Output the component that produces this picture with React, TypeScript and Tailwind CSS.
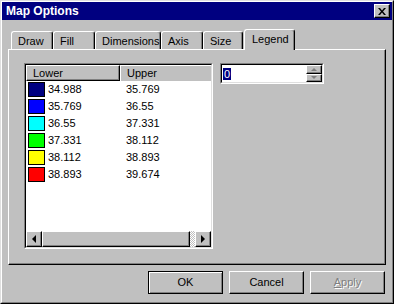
import React from 'react';

const rows = [
  { color: 'bg-[#000080]', lower: '34.988', upper: '35.769' },
  { color: 'bg-[#0000ff]', lower: '35.769', upper: '36.55' },
  { color: 'bg-[#00ffff]', lower: '36.55', upper: '37.331' },
  { color: 'bg-[#00ff00]', lower: '37.331', upper: '38.112' },
  { color: 'bg-[#ffff00]', lower: '38.112', upper: '38.893' },
  { color: 'bg-[#ff0000]', lower: '38.893', upper: '39.674' },
];

const tabs = [
  { label: 'Draw', w: 'w-[42px] ml-[3px]' },
  { label: 'Fill', w: 'w-[42px]' },
  { label: 'Dimensions', w: 'w-[66px]' },
  { label: 'Axis', w: 'w-[42px]' },
  { label: 'Size', w: 'w-[40px]' },
];

const raised =
  'border-t border-l border-t-white border-l-white border-r border-b border-r-black border-b-black shadow-[inset_-1px_-1px_#808080]';

function Arrow({ dir }: { dir: 'left' | 'right' | 'up' | 'down' }) {
  const points = {
    left: '4,0 4,8 0,4',
    right: '0,0 0,8 4,4',
    up: '0,4 6,4 3,1',
    down: '0,0 6,0 3,3',
  }[dir];
  const horiz = dir === 'left' || dir === 'right';
  return (
    <svg width={horiz ? 4 : 6} height={horiz ? 8 : 4} viewBox={horiz ? '0 0 4 8' : '0 0 6 4'}>
      <polygon points={points} fill={horiz ? '#000' : '#808080'} />
    </svg>
  );
}

export default function App() {
  return (
    <div className="w-[394px] h-[304px] bg-[#c0c0c0] border border-t-[#dfdfdf] border-l-[#dfdfdf] border-r-black border-b-black font-['Liberation_Sans',Arial,sans-serif] text-[11px] text-black select-none">
      <div className="h-full flex flex-col border border-t-white border-l-white border-r-[#808080] border-b-[#808080]">
        {/* title bar */}
        <div className="h-[18px] bg-[#000080] flex items-center justify-between pl-[4px] pr-[2px]">
          <span className="text-white font-bold text-[12px] leading-none">Map Options</span>
          <button className={`w-[16px] h-[14px] bg-[#c0c0c0] flex items-center justify-center ${raised}`}>
            <svg width="8" height="7" viewBox="0 0 8 7">
              <path d="M0 0h2l2 2.5L6 0h2L5 3.5 8 7H6L4 4.5 2 7H0l3-3.5z" fill="#000" />
            </svg>
          </button>
        </div>

        <div className="pl-[6px] pt-[9px]">
          {/* tabs */}
          <div className="flex items-end h-[21px] -mb-px relative z-10">
            {tabs.map(t => (
              <div
                key={t.label}
                className={`${t.w} h-[18px] mb-px pl-[6px] pt-[2px] border-t border-l border-t-white border-l-white border-r border-r-black shadow-[inset_-1px_0_#808080] rounded-t-[3px] leading-[14px]`}
              >
                {t.label}
              </div>
            ))}
            <div className="w-[51px] h-[21px] ml-[1px] pl-[7px] pt-[2px] bg-[#c0c0c0] border-t border-l border-t-white border-l-white border-r border-r-black shadow-[inset_-1px_0_#808080] rounded-t-[3px] leading-[14px]">
              Legend
            </div>
          </div>

          {/* panel */}
          <div className={`w-[378px] h-[216px] flex pl-[15px] pt-[13px] ${raised}`}>
            {/* list */}
            <div className="w-[189px] h-[186px] border border-t-[#808080] border-l-[#808080] border-r-white border-b-white">
              <div className="h-full flex flex-col bg-white border border-t-black border-l-black border-r-[#dfdfdf] border-b-[#dfdfdf] overflow-hidden">
                <div className="flex h-[16px] shrink-0">
                  <div className={`w-[94px] h-full bg-[#c0c0c0] pl-[6px] leading-[14px] ${raised}`}>Lower</div>
                  <div className={`flex-1 h-full bg-[#c0c0c0] pl-[6px] leading-[14px] border-t border-l border-t-white border-l-white`}>Upper</div>
                </div>
                <div className="flex-1">
                  {rows.map(r => (
                    <div key={r.lower} className="flex items-center h-[17px]">
                      <div className={`w-[17px] h-[15px] ml-[2px] border border-black ${r.color}`} />
                      <span className="w-[75px] pl-[3px]">{r.lower}</span>
                      <span className="pl-[6px]">{r.upper}</span>
                    </div>
                  ))}
                </div>
                {/* scrollbar */}
                <div className="flex h-[16px] shrink-0 bg-[#c0c0c0]">
                  <div className={`w-[16px] h-full bg-[#c0c0c0] flex items-center justify-center ${raised}`}>
                    <Arrow dir="left" />
                  </div>
                  <div className={`w-[148px] h-full bg-[#c0c0c0] ${raised}`} />
                  <div className="flex-1 h-full bg-[repeating-conic-gradient(#c0c0c0_0_25%,#ffffff_0_50%)] bg-[length:2px_2px]" />
                  <div className={`w-[16px] h-full bg-[#c0c0c0] flex items-center justify-center ${raised}`}>
                    <Arrow dir="right" />
                  </div>
                </div>
              </div>
            </div>

            {/* spin edit */}
            <div className="ml-[7px] w-[104px] h-[21px] border border-t-[#808080] border-l-[#808080] border-r-white border-b-white">
              <div className="h-full flex bg-white border border-t-black border-l-black border-r-[#dfdfdf] border-b-[#dfdfdf]">
                <div className="flex-1 flex items-center pl-[1px]">
                  <span className="bg-[#000080] text-white leading-[12px] px-px">0</span>
                </div>
                <div className="w-[16px] flex flex-col">
                  <div className={`flex-1 bg-[#c0c0c0] flex items-center justify-center ${raised}`}>
                    <Arrow dir="up" />
                  </div>
                  <div className={`flex-1 bg-[#c0c0c0] flex items-center justify-center ${raised}`}>
                    <Arrow dir="down" />
                  </div>
                </div>
              </div>
            </div>
          </div>

          {/* buttons */}
          <div className="flex gap-[6px] ml-[140px] mt-[6px]">
            <button className="w-[75px] h-[23px] border border-black shadow-[inset_1px_1px_#fff,inset_-1px_-1px_#808080] bg-[#c0c0c0] text-[11px]">
              OK
            </button>
            <button className={`w-[75px] h-[23px] bg-[#c0c0c0] text-[11px] ${raised}`}>Cancel</button>
            <button className={`w-[75px] h-[23px] bg-[#c0c0c0] text-[11px] text-[#808080] [text-shadow:1px_1px_#fff] ${raised}`}>
              <span className="underline">A</span>pply
            </button>
          </div>
        </div>
      </div>
    </div>
  );
}
